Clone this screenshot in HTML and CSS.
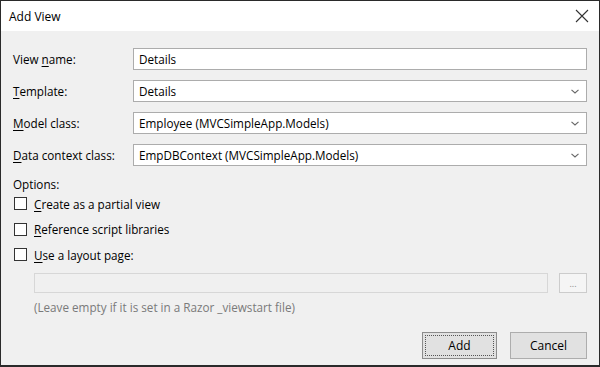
FILE: index.html
```html
<!DOCTYPE html>
<html>
<head>
<meta charset="utf-8">
<link rel="stylesheet" href="styles.css">
</head>
<body>
<div class="window">
  <div class="titlebar">
    <span class="title">Add View</span>
    <svg class="close" width="14" height="14" viewBox="0 0 14 14"><path d="M1 1 L13 13 M13 1 L1 13" stroke="#333" stroke-width="1.1" fill="none"/></svg>
  </div>
  <div class="content">
    <div class="form">
      <label class="lbl"><span>View <u>n</u>ame:</span></label>
      <div class="field"><span class="val">Details</span></div>
      <label class="lbl"><span><u>T</u>emplate:</span></label>
      <div class="field"><span class="val">Details</span><svg class="chev" width="8" height="5" viewBox="0 0 8 5"><path d="M0.5 0.8 L4 4 L7.5 0.8" stroke="#666" stroke-width="1.1" fill="none"/></svg></div>
      <label class="lbl"><span><u>M</u>odel class:</span></label>
      <div class="field"><span class="val">Employee (MVCSimpleApp.Models)</span><svg class="chev" width="8" height="5" viewBox="0 0 8 5"><path d="M0.5 0.8 L4 4 L7.5 0.8" stroke="#666" stroke-width="1.1" fill="none"/></svg></div>
      <label class="lbl"><span><u>D</u>ata context class:</span></label>
      <div class="field"><span class="val">EmpDBContext (MVCSimpleApp.Models)</span><svg class="chev" width="8" height="5" viewBox="0 0 8 5"><path d="M0.5 0.8 L4 4 L7.5 0.8" stroke="#666" stroke-width="1.1" fill="none"/></svg></div>
    </div>
    <div class="options">Options:</div>
    <div class="checks">
      <div class="check"><span class="box"></span><span><u>C</u>reate as a partial view</span></div>
      <div class="check"><span class="box"></span><span><u>R</u>eference script libraries</span></div>
      <div class="check"><span class="box"></span><span><u>U</u>se a layout page:</span></div>
    </div>
    <div class="layout">
      <div class="pathbox"></div>
      <div class="browse">...</div>
    </div>
    <div class="hint">(Leave empty if it is set in a Razor _viewstart file)</div>
    <div class="buttons">
      <div class="btn add"><span class="focus">Add</span></div>
      <div class="btn cancel">Cancel</div>
    </div>
  </div>
</div>
</body>
</html>
```
FILE: styles.css
```css
html, body {
  margin: 0;
  padding: 0;
  background: #f0f0f0;
}
body {
  font-family: "Open Sans", "Noto Sans", sans-serif;
  font-size: 11.7px;
  color: #000;
}
u { text-decoration: underline; text-underline-offset: 2px; }
.window {
  width: 600px;
  height: 367px;
  box-sizing: border-box;
  border: 1px solid #2a2a2a;
  border-bottom-width: 2px;
  display: flex;
  flex-direction: column;
  background: #f0f0f0;
}
.titlebar {
  height: 30px;
  background: #fff;
  display: flex;
  align-items: center;
  justify-content: space-between;
  padding: 0 10px 0 8px;
  flex: none;
}
.title {
  font-size: 12px;
  color: #000;
}
.content {
  flex: 1;
  padding: 17px 12px 0 12px;
  display: flex;
  flex-direction: column;
}
.form {
  display: grid;
  grid-template-columns: 120px 1fr;
  grid-auto-rows: 22px;
  row-gap: 10px;
}
.lbl {
  display: flex;
  align-items: center;
}
.field {
  background: #fff;
  border: 1px solid #acacac;
  box-sizing: border-box;
  display: flex;
  align-items: center;
  justify-content: space-between;
  padding: 0 7px 0 5px;
}
.chev { flex: none; }
.options {
  margin-top: 10px;
  line-height: 16px;
}
.checks {
  margin-top: 3px;
  display: flex;
  flex-direction: column;
  gap: 8.5px;
}
.check {
  display: flex;
  align-items: center;
  height: 17px;
  gap: 7px;
  padding-left: 1px;
}
.box {
  width: 13px;
  height: 13px;
  box-sizing: border-box;
  border: 1px solid #333;
  background: #fff;
  flex: none;
}
.layout {
  margin-top: 10px;
  padding-left: 21px;
  display: flex;
  gap: 11px;
  height: 20px;
}
.pathbox {
  flex: 1;
  border: 1px solid #d7d7d7;
  background: #f0f0f0;
}
.browse {
  width: 28px;
  box-sizing: border-box;
  border: 1px solid #cccccc;
  background: #f5f5f5;
  color: #8a8a8a;
  font-size: 9px;
  display: flex;
  align-items: center;
  justify-content: center;
  line-height: 1;
}
.hint {
  margin-top: 6px;
  padding-left: 21px;
  line-height: 16px;
  color: #7a7a7a;
}
.buttons {
  margin-top: 17px;
  display: flex;
  justify-content: flex-end;
  gap: 13px;
}
.btn {
  height: 27px;
  box-sizing: border-box;
  border: 1px solid #adadad;
  background: #e1e1e1;
  display: flex;
  align-items: center;
  justify-content: center;
  font-size: 12px;
}
.add {
  width: 75px;
  border-color: #8c8c8c;
  padding: 2px;
}
.focus {
  flex: 1;
  align-self: stretch;
  border: 1px dotted #555;
  display: flex;
  align-items: center;
  justify-content: center;
}
.cancel { width: 77px; }
```
